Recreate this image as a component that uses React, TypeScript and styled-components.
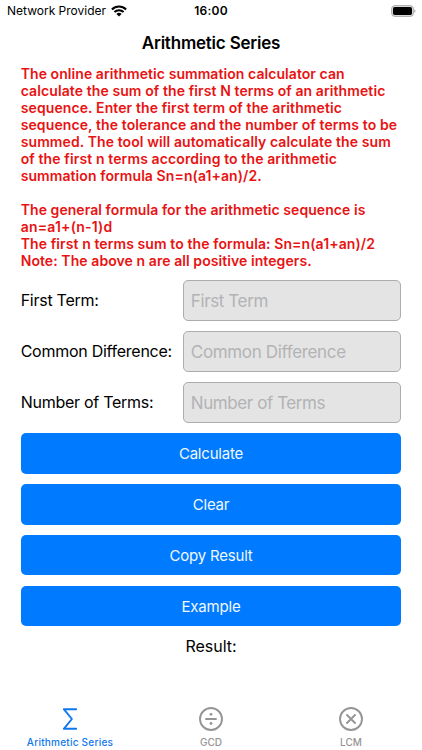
import React from "react";
import styled, { createGlobalStyle } from "styled-components";

const GlobalStyle = createGlobalStyle`
  *, *::before, *::after { box-sizing: border-box; }
  body { margin: 0; background: #fff; }
`;

const Screen = styled.div`
  display: flex;
  flex-direction: column;
  width: 422px;
  height: 750px;
  overflow: hidden;
  background: #fff;
  color: #000;
  font-family: Inter, "Liberation Sans", sans-serif;
  white-space: nowrap;
`;

const StatusBar = styled.header`
  display: grid;
  grid-template-columns: 1fr auto 1fr;
  align-items: center;
  height: 22px;
  padding: 0 6px 0 7px;
  font-size: 12px;
  line-height: 22px;
`;

const Carrier = styled.div`
  display: flex;
  align-items: center;
  gap: 4.5px;
`;

const Clock = styled.time`
  margin-right: 1px;
  font-weight: 600;
  letter-spacing: 0.25px;
`;

const BatterySlot = styled.div`
  display: flex;
  justify-content: flex-end;
`;

const Title = styled.h1`
  height: 43px;
  margin: 0;
  font-size: 17px;
  font-weight: 600;
  line-height: 43px;
  letter-spacing: -0.21px;
  text-align: center;
`;

const Content = styled.main`
  flex: 1;
  padding: 0 20.7px;
`;

const Description = styled.div`
  display: flex;
  flex-direction: column;
  gap: 17px;
  color: #e81313;
  font-size: 14px;
  font-weight: 600;
  line-height: 17px;
`;

const Paragraph = styled.p`
  margin: 0;
`;

const Line = styled.span<{ $tracking: number }>`
  display: block;
  letter-spacing: ${(p) => p.$tracking}px;
`;

const Form = styled.form`
  display: flex;
  flex-direction: column;
  gap: 10.2px;
  margin-top: 11px;
`;

const FieldRow = styled.label`
  display: flex;
  align-items: center;
  justify-content: space-between;
  height: 40.75px;
  font-size: 16px;
  letter-spacing: -0.265px;
`;

const FieldName = styled.span`
  padding-bottom: 1px;
`;

const Input = styled.input<{ $tracking: number }>`
  width: 218px;
  height: 100%;
  margin: 0;
  padding: 1px 0 0 6.5px;
  border: 1px solid #adadaf;
  border-radius: 5px;
  outline: none;
  background: #e4e4e4;
  font: 400 17px Inter, "Liberation Sans", sans-serif;
  letter-spacing: ${(p) => p.$tracking}px;

  &::placeholder {
    color: #b3b3b5;
    opacity: 1;
  }
`;

const Button = styled.button`
  height: 40.75px;
  padding: 1px 0 0;
  border: 0;
  border-radius: 5px;
  background: #007aff;
  color: #f0f8ff;
  font: 400 15px Inter, "Liberation Sans", sans-serif;
  letter-spacing: -0.2px;
`;

const Result = styled.output`
  display: block;
  margin-top: 9.5px;
  font-size: 16px;
  line-height: 20px;
  text-align: center;
`;

const TabBar = styled.nav`
  display: flex;
  justify-content: center;
  height: 49px;
`;

const Tab = styled.a<{ $active?: boolean }>`
  display: flex;
  flex-direction: column;
  align-items: center;
  gap: 3px;
  width: ${(p) => (p.$active ? "142px" : "140px")};
  margin-left: ${(p) => (p.$active ? "-2px" : "0")};
  padding-top: 5px;
  color: ${(p) => (p.$active ? "#0f78ee" : "#959595")};
  font-size: 10px;
  font-weight: 500;
  line-height: 14px;
  letter-spacing: ${(p) => (p.$active ? "0.24px" : "0.04px")};
`;

const WifiIcon = () => (
  <svg width="16" height="12" viewBox="0 0 16 12" fill="none" stroke="#000">
    <path d="M0.9 4.4a10.2 10.2 0 0 1 14.2 0" strokeWidth="2.1" />
    <path d="M3.4 7a6.6 6.6 0 0 1 9.2 0" strokeWidth="2" />
    <path d="M5.4 8.9a3.8 3.8 0 0 1 5.2 0L8 11.6Z" fill="#000" stroke="none" />
  </svg>
);

const BatteryIcon = () => (
  <svg width="25" height="12" viewBox="0 0 25 12">
    <rect x="0.6" y="0.6" width="21.8" height="10.8" rx="3.2" fill="#ddd" stroke="#aaa" />
    <rect x="2" y="2" width="19" height="8" rx="1.7" fill="#000" />
    <path d="M23.4 4.2c1.4.5 1.4 3.1 0 3.6Z" fill="#999" />
  </svg>
);

const SigmaIcon = () => (
  <svg width="26" height="26" viewBox="0 0 26 26" fill="none" stroke="currentColor" strokeWidth="1.9" strokeLinecap="round" strokeLinejoin="round">
    <path d="M19.2 3.2H6.8L14.9 13 6.8 22.8H19.2" />
  </svg>
);

const DivideIcon = () => (
  <svg width="26" height="26" viewBox="0 0 26 26" fill="none" stroke="currentColor" strokeWidth="1.9" strokeLinecap="round">
    <circle cx="13" cy="13" r="11" />
    <path d="M8 13h10" />
    <circle cx="13" cy="8.3" r="1.4" fill="currentColor" stroke="none" />
    <circle cx="13" cy="17.5" r="1.4" fill="currentColor" stroke="none" />
  </svg>
);

const MultiplyIcon = () => (
  <svg width="26" height="26" viewBox="0 0 26 26" fill="none" stroke="currentColor" strokeWidth="1.9" strokeLinecap="round">
    <circle cx="13" cy="13" r="11" />
    <path d="M9 9l8 8M17 9l-8 8" />
  </svg>
);

const paragraphs: { text: string; tracking: number }[][] = [
  [
    { text: "The online arithmetic summation calculator can", tracking: 0.065 },
    { text: "calculate the sum of the first N terms of an arithmetic", tracking: 0.095 },
    { text: "sequence. Enter the first term of the arithmetic", tracking: 0.11 },
    { text: "sequence, the tolerance and the number of terms to be", tracking: 0.105 },
    { text: "summed. The tool will automatically calculate the sum", tracking: 0.095 },
    { text: "of the first n terms according to the arithmetic", tracking: 0.118 },
    { text: "summation formula Sn=n(a1+an)/2.", tracking: 0.08 },
  ],
  [
    { text: "The general formula for the arithmetic sequence is", tracking: 0.065 },
    { text: "an=a1+(n-1)d", tracking: 0.188 },
    { text: "The first n terms sum to the formula: Sn=n(a1+an)/2", tracking: 0.093 },
    { text: "Note: The above n are all positive integers.", tracking: 0.074 },
  ],
];

const fields = [
  { name: "First Term", tracking: -0.388 },
  { name: "Common Difference", tracking: -0.35 },
  { name: "Number of Terms", tracking: -0.42 },
];

const actions = ["Calculate", "Clear", "Copy Result", "Example"];

export default function App() {
  return (
    <Screen>
      <GlobalStyle />
      <StatusBar>
        <Carrier>
          <span>Network Provider</span>
          <WifiIcon />
        </Carrier>
        <Clock>16:00</Clock>
        <BatterySlot>
          <BatteryIcon />
        </BatterySlot>
      </StatusBar>
      <Title>Arithmetic Series</Title>
      <Content>
        <Description>
          {paragraphs.map((lines, i) => (
            <Paragraph key={i}>
              {lines.map((line) => (
                <Line key={line.text} $tracking={line.tracking}>
                  {line.text}
                </Line>
              ))}
            </Paragraph>
          ))}
        </Description>
        <Form>
          {fields.map((field) => (
            <FieldRow key={field.name}>
              <FieldName>{field.name}:</FieldName>
              <Input placeholder={field.name} $tracking={field.tracking} />
            </FieldRow>
          ))}
          {actions.map((action) => (
            <Button key={action} type="button">
              {action}
            </Button>
          ))}
        </Form>
        <Result>Result:</Result>
      </Content>
      <TabBar>
        <Tab $active>
          <SigmaIcon />
          Arithmetic Series
        </Tab>
        <Tab>
          <DivideIcon />
          GCD
        </Tab>
        <Tab>
          <MultiplyIcon />
          LCM
        </Tab>
      </TabBar>
    </Screen>
  );
}
